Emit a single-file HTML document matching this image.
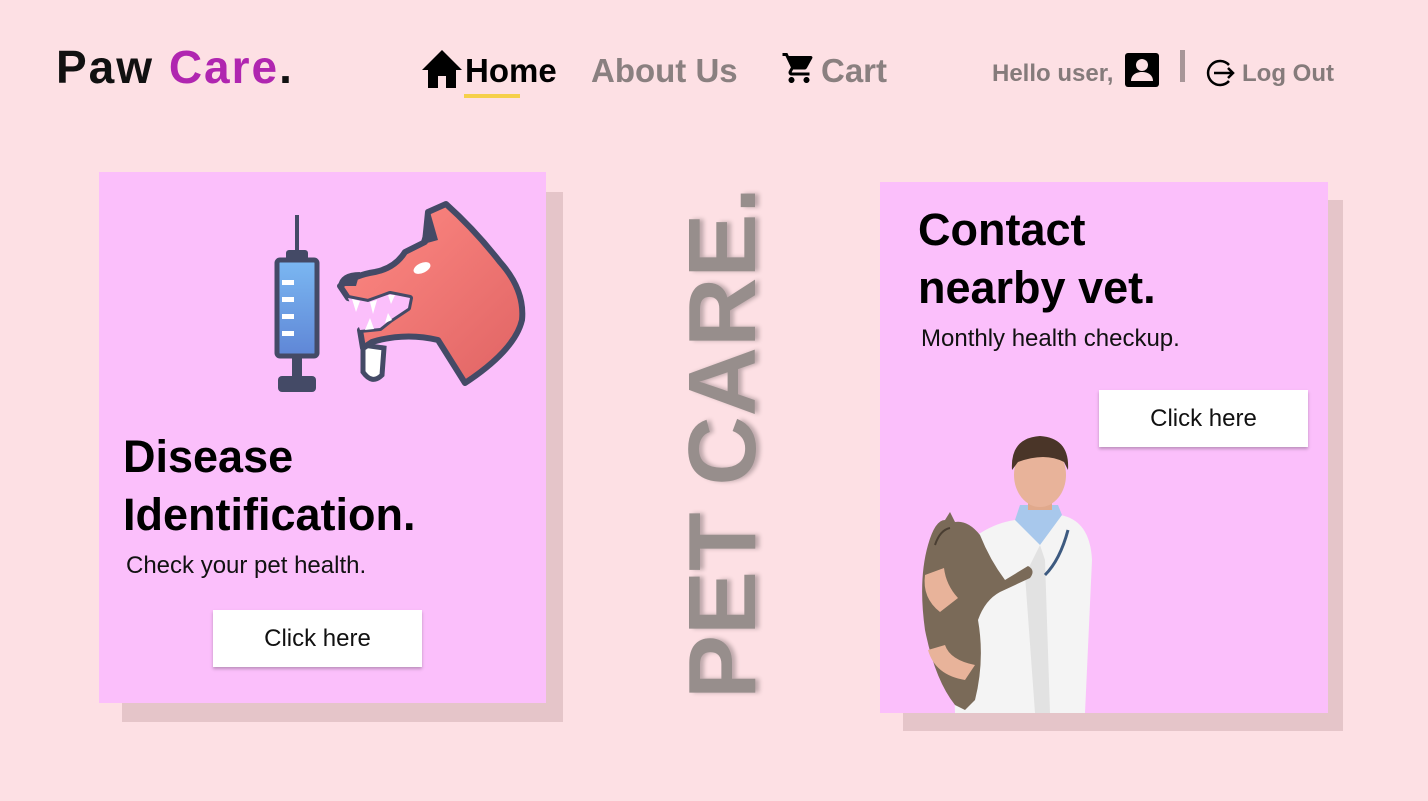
<!DOCTYPE html>
<html><head><meta charset="utf-8"><style>
*{margin:0;padding:0;box-sizing:border-box}
body{width:1428px;height:801px;background:#fde0e4;position:relative;overflow:hidden;font-family:"Liberation Sans",sans-serif}
.abs{position:absolute}
.logo{left:56px;top:40px;font-size:46px;font-weight:bold;color:#111;letter-spacing:2px}
.logo span{color:#b026b0}
.nav{font-size:33px;font-weight:bold;color:#8a8080;top:52px}
.card{background:#fbbffb}
.sh{background:#e5c5c9}
.h{font-weight:bold;color:#000;font-size:45px;line-height:58px}
.p{font-size:24px;color:#111}
.btn{background:#fff;font-size:24px;color:#111;text-align:center;box-shadow:0 2px 3px rgba(0,0,0,.25)}
</style></head><body>
<div class="abs logo">Paw <span>Care</span>.</div>

<svg class="abs" style="left:422px;top:50px" width="40" height="38" viewBox="0 0 40 38"><path d="M20 0 L40 20 L34 20 L34 38 L24 38 L24 26 L16 26 L16 38 L6 38 L6 20 L0 20Z" fill="#000"/></svg>
<div class="abs nav" style="left:465px;color:#000">Home</div>
<div class="abs" style="left:464px;top:94px;width:56px;height:4px;background:#f5d04a"></div>
<div class="abs nav" style="left:591px">About Us</div>
<svg class="abs" style="left:780px;top:50px" width="38" height="36" viewBox="0 0 24 24"><path d="M7 18c-1.1 0-2 .9-2 2s.9 2 2 2 2-.9 2-2-.9-2-2-2zM1 2v2h2l3.6 7.6-1.35 2.4C5.1 14.3 5 14.6 5 15c0 1.1.9 2 2 2h12v-2H7.4c-.1 0-.25-.1-.25-.25l.03-.12.9-1.630h7.45c.75 0 1.4-.4 1.75-1.03l3.58-6.5A1 1 0 0 0 20 4H5.2l-.94-2H1zm16 16c-1.1 0-2 .9-2 2s.9 2 2 2 2-.9 2-2-.9-2-2-2z" fill="#000"/></svg>
<div class="abs nav" style="left:821px">Cart</div>

<div class="abs" style="left:992px;top:60px;font-size:24px;font-weight:bold;color:#857b7b">Hello user,</div>
<svg class="abs" style="left:1125px;top:53px" width="34" height="34" viewBox="0 0 34 34"><rect width="34" height="34" rx="3" fill="#000"/><circle cx="17" cy="12" r="6" fill="#fde0e4"/><path d="M6 28c0-6 5-9 11-9s11 3 11 9z" fill="#fde0e4"/></svg>
<div class="abs" style="left:1180px;top:50px;width:5px;height:32px;background:#a89698"></div>
<svg class="abs" style="left:1205px;top:59px" width="32" height="28" viewBox="0 0 32 28"><path d="M24 6 A12 12 0 1 0 24 22" fill="none" stroke="#000" stroke-width="2.5"/><path d="M9 14 H28 M23 9 L28 14 L23 19" fill="none" stroke="#000" stroke-width="2.5"/></svg>
<div class="abs" style="left:1242px;top:60px;font-size:24px;font-weight:bold;color:#857b7b">Log Out</div>

<!-- left card -->
<div class="abs sh" style="left:122px;top:192px;width:441px;height:530px"></div>
<div class="abs card" style="left:99px;top:172px;width:447px;height:531px"></div>
<svg class="abs" style="left:260px;top:190px" width="280" height="210" viewBox="0 0 280 210">
<defs><linearGradient id="g1" x1="0" y1="0" x2="0" y2="1"><stop offset="0" stop-color="#7bb8f2"/><stop offset="1" stop-color="#5f86d6"/></linearGradient>
<linearGradient id="g2" x1="0" y1="0" x2="1" y2="1"><stop offset="0" stop-color="#ff8a84"/><stop offset="1" stop-color="#e06464"/></linearGradient></defs>
<rect x="35" y="25" width="4" height="38" fill="#444a66"/>
<rect x="26" y="60" width="22" height="12" rx="3" fill="#444a66"/>
<rect x="17" y="70" width="40" height="96" rx="3" fill="url(#g1)" stroke="#444a66" stroke-width="5"/>
<rect x="22" y="90" width="12" height="5" fill="#fff"/><rect x="22" y="107" width="12" height="5" fill="#fff"/><rect x="22" y="124" width="12" height="5" fill="#fff"/><rect x="22" y="141" width="12" height="5" fill="#fff"/>
<rect x="32" y="168" width="10" height="22" fill="#444a66"/>
<rect x="18" y="186" width="38" height="16" rx="4" fill="#444a66"/>
<path d="M103 155 L103 182 Q112 195 122 185 L124 158 Z" fill="#fff" stroke="#444a66" stroke-width="5"/>
<path d="M165 52 L168 22 L186 14 Q215 40 240 72 Q265 100 262 130 Q255 160 205 193 L178 150 Q145 142 112 152 L103 158 L100 140 L120 138 L130 130 L148 118 L150 108 L130 104 L108 112 L88 108 L80 96 Q95 85 115 82 Q135 78 145 62 Z" fill="url(#g2)" stroke="#444a66" stroke-width="6" stroke-linejoin="round"/>
<path d="M88 108 L108 112 L130 104 L150 108 L148 118 L130 130 L120 138 L100 140 Q95 125 88 108Z" fill="#fbbffb"/>
<path d="M92 109 L96 122 L100 111Z M110 112 L113 124 L117 110Z M128 105 L131 114 L135 105Z M105 140 L110 128 L114 139Z M125 133 L128 123 L132 130Z" fill="#fff"/>
<path d="M160 55 L170 22 L178 50Z" fill="#444a66"/>
<path d="M78 96 Q80 82 100 82 L96 96Z" fill="#444a66"/>
<ellipse cx="162" cy="78" rx="9" ry="5" transform="rotate(-25 162 78)" fill="#fff"/>
</svg>
<div class="abs h" style="left:123px;top:428px">Disease<br>Identification.</div>
<div class="abs p" style="left:126px;top:552px">Check your pet health.</div>
<div class="abs btn" style="left:213px;top:610px;width:209px;height:57px;line-height:57px">Click here</div>

<!-- PET CARE -->
<div class="abs" style="left:723px;top:443px;transform:translate(-50%,-50%) rotate(-90deg);font-size:96px;font-weight:bold;color:#978e8c;white-space:nowrap;letter-spacing:0px;text-shadow:0 4px 4px rgba(0,0,0,.25)">PET CARE.</div>

<!-- right card -->
<div class="abs sh" style="left:903px;top:200px;width:440px;height:531px"></div>
<div class="abs card" style="left:880px;top:182px;width:448px;height:531px;overflow:hidden">
<svg width="448" height="531" viewBox="880 182 448 531">
<path d="M950 560 Q980 525 1015 520 L1060 515 Q1090 520 1092 560 L1085 713 L955 713 Z" fill="#f4f4f4"/>
<path d="M1015 520 L1040 545 L1062 515 L1058 505 L1020 505Z" fill="#a8c8ec"/>
<path d="M1040 545 L1025 575 L1035 713 L1050 713 L1045 560Z" fill="#e2e2e2"/>
<rect x="1028" y="488" width="24" height="22" fill="#e0a98c"/>
<ellipse cx="1040" cy="475" rx="26" ry="32" fill="#e8b39a"/>
<path d="M1012 470 Q1010 438 1040 436 Q1070 438 1068 470 L1064 462 Q1045 452 1018 462Z" fill="#4a3528"/>
<path d="M1068 530 Q1060 560 1045 575" fill="none" stroke="#3d5a80" stroke-width="3"/>
<path d="M928 545 Q935 520 945 520 L950 512 L955 522 Q968 520 980 535 Q990 560 1005 580 L1028 566 Q1036 570 1030 578 L1000 592 Q985 600 978 620 Q985 660 975 700 L965 710 L955 705 Q935 680 925 630 Q918 580 928 545Z" fill="#7a6a58"/>
<path d="M935 545 Q940 530 950 528" stroke="#4a3e32" stroke-width="2" fill="none"/>
<path d="M925 575 Q922 598 940 612 L958 598 Q946 585 944 568Z" fill="#e8b39a"/>
<path d="M928 650 Q935 675 965 680 L975 665 Q950 660 945 645Z" fill="#e8b39a"/>
</svg>
</div>
<div class="abs h" style="left:918px;top:201px">Contact<br>nearby vet.</div>
<div class="abs p" style="left:921px;top:325px">Monthly health checkup.</div>
<div class="abs btn" style="left:1099px;top:390px;width:209px;height:57px;line-height:57px">Click here</div>
</body></html>
